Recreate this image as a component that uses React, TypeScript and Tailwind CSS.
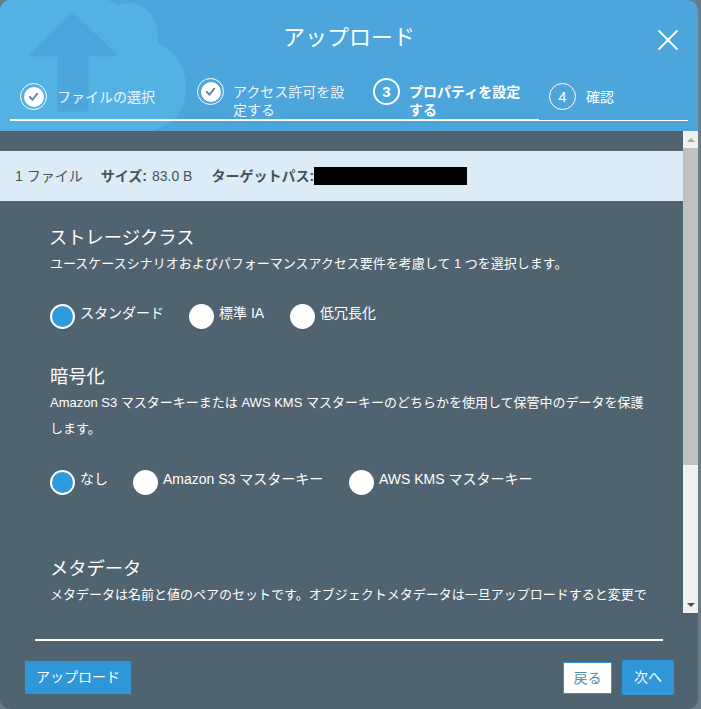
import React from "react";

const FONT = '"Liberation Sans", "Noto Sans CJK JP", sans-serif';

function Done() {
  return (
    <span className="flex h-[27px] w-[27px] shrink-0 items-center justify-center rounded-full border-[1.5px] border-white">
      <span className="flex h-[20px] w-[20px] items-center justify-center rounded-full bg-white">
        <svg viewBox="0 0 14 14" className="h-[13px] w-[13px]" fill="none" stroke="#5b8cab" strokeWidth="2.2" strokeLinecap="round" strokeLinejoin="round">
          <path d="M3 7.5 L6 10.5 L11 4" />
        </svg>
      </span>
    </span>
  );
}

function Radio({ on, label, className }: { on?: boolean; label: string; className: string }) {
  return (
    <div className={`flex items-center ${className}`}>
      <span className={`h-[25px] w-[25px] shrink-0 rounded-full ${on ? "border-2 border-white bg-[#2f9ade]" : "bg-white"}`} />
      <span className="-mt-[7px] ml-[5px] text-[14px] leading-[20px] text-white">{label}</span>
    </div>
  );
}

export default function App() {
  return (
    <div className="h-[709px] w-[701px] overflow-hidden bg-[#6b7b85]" style={{ fontFamily: FONT }}>
      <div className="flex h-[709px] w-[698px] flex-col overflow-hidden rounded-[10px] bg-[#4f6370]">
        <div className="relative h-[131px] shrink-0 overflow-hidden bg-[#4ca6dc]">
          <svg className="absolute left-0 top-0" width="190" height="131" viewBox="0 0 190 131">
            <path d="M0 0 H108 C114 3 118 5 122 4 C140 -1 160 12 158 44 C176 52 187 68 186 90 C185 112 172 126 150 131 H0 Z" fill="#54b1e3" />
            <path d="M72 13 L115 55 H87 V110 H59 V55 H31 Z" fill="#4ca6dc" stroke="#4ca6dc" strokeWidth="3" strokeLinejoin="round" />
          </svg>
          <h1 className="relative pt-[23px] text-center text-[22px] font-normal leading-[30px] text-white">アップロード</h1>
          <svg className="absolute left-[657px] top-[29px]" width="22" height="22" viewBox="0 0 22 22" fill="none" stroke="#fff" strokeWidth="2">
            <path d="M1.5 1.5 L20.5 20.5 M20.5 1.5 L1.5 20.5" />
          </svg>
          <div className="absolute left-[10px] top-[76px] flex h-[45px] w-[678px] text-[14px] leading-[18px] text-white">
            <div className="flex w-[183px] items-start border-b-2 border-white pl-[10px] pt-[7px]">
              <Done />
              <span className="ml-[10px] mt-[5px] opacity-90">ファイルの選択</span>
            </div>
            <div className="flex w-[176px] items-start border-b-2 border-white pl-[4px] pt-[2px]">
              <Done />
              <span className="ml-[9px] mt-[5px] w-[120px] opacity-90">アクセス許可を設定する</span>
            </div>
            <div className="flex w-[170px] items-start border-b-2 border-white pl-[4px] pt-[2px]">
              <span className="flex h-[27px] w-[27px] shrink-0 items-center justify-center rounded-full border-2 border-white text-[15px] font-bold">3</span>
              <span className="ml-[9px] mt-[5px] w-[120px] font-bold">プロパティを設定する</span>
            </div>
            <div className="flex flex-1 items-start border-b border-white pl-[10px] pt-[7px]">
              <span className="flex h-[27px] w-[27px] shrink-0 items-center justify-center rounded-full border border-white text-[15px]">4</span>
              <span className="ml-[10px] mt-[5px]">確認</span>
            </div>
          </div>
        </div>

        <div className="flex h-[482px] shrink-0">
          <div className="min-w-0 flex-1 overflow-hidden">
            <div className="mt-[20px] flex h-[50px] items-center bg-[#dcecf6] pl-[15px] text-[14px] text-[#46525b]">
              <span>1 ファイル</span>
              <b className="ml-[18px]">サイズ:</b>
              <span className="ml-[5px]">83.0 B</span>
              <b className="ml-[19px]">ターゲットパス:</b>
              <span className="h-[18px] w-[153px] bg-black" />
            </div>
            <div className="pl-[50px] pr-[30px] text-white">
              <h2 className="-ml-[1px] mt-[25px] text-[18.3px] font-normal leading-[24px]">ストレージクラス</h2>
              <p className="mt-[4px] text-[13px] leading-[20px]">ユースケースシナリオおよびパフォーマンスアクセス要件を考慮して 1 つを選択します。</p>
              <div className="mt-[30px] flex">
                <Radio on label="スタンダード" className="w-[139px]" />
                <Radio label="標準 IA" className="w-[101px]" />
                <Radio label="低冗長化" className="w-[100px]" />
              </div>
              <h2 className="mt-[36px] text-[18.3px] font-normal leading-[24px]">暗号化</h2>
              <p className="mt-[1px] text-[13px] leading-[26px]">Amazon S3 マスターキーまたは AWS KMS マスターキーのどちらかを使用して保管中のデータを保護します。</p>
              <div className="mt-[28px] flex">
                <Radio on label="なし" className="w-[83px]" />
                <Radio label="Amazon S3 マスターキー" className="w-[216px]" />
                <Radio label="AWS KMS マスターキー" className="w-[200px]" />
              </div>
              <h2 className="mt-[62px] text-[18.3px] font-normal leading-[24px]">メタデータ</h2>
              <p className="mt-[4px] whitespace-nowrap text-[13px] leading-[20px]">メタデータは名前と値のペアのセットです。オブジェクトメタデータは一旦アップロードすると変更で</p>
            </div>
          </div>
          <div className="flex h-[482px] w-[15px] shrink-0 flex-col bg-[#f1f1f1]">
            <div className="flex h-[17px] items-center justify-center">
              <span className="h-0 w-0 border-x-[4px] border-b-[4px] border-x-transparent border-b-[#a3a3a3]" />
            </div>
            <div className="h-[317px] bg-[#c1c1c1]" />
            <div className="flex-1" />
            <div className="flex h-[17px] items-center justify-center">
              <span className="h-0 w-0 border-x-[4px] border-t-[4px] border-x-transparent border-t-[#505050]" />
            </div>
          </div>
        </div>

        <div className="mx-[35px] mt-[26px] h-[2px] bg-white" />
        <div className="mt-[20px] flex items-start pl-[25px] pr-[24px]">
          <button className="h-[33px] w-[106px] bg-[#2f96d8] text-[14px] text-white">アップロード</button>
          <div className="flex-1" />
          <button className="mt-[1px] h-[32px] w-[49px] border border-[#2f96d8] bg-white text-[14px] text-[#5b8ba8]">戻る</button>
          <button className="-mt-[1px] ml-[10px] h-[35px] w-[52px] rounded-[2px] bg-[#2f96d8] text-[14px] text-white">次へ</button>
        </div>
      </div>
    </div>
  );
}
